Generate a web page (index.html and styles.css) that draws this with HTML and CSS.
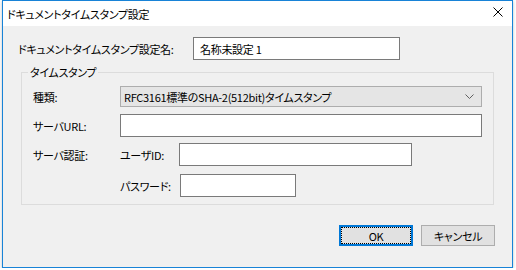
FILE: index.html
```html
<!DOCTYPE html>
<html lang="ja">
<head>
  <meta charset="UTF-8" />
  <title>ドキュメントタイムスタンプ設定</title>
  <link rel="stylesheet" href="styles.css">
</head>
<body>
  <div class="window">
    <div class="titlebar">
      <span class="title">ドキュメントタイムスタンプ設定</span>
      <svg class="close" width="10" height="10" viewBox="0 0 10 10">
        <path d="M0.5 0.5 L9.5 9.5 M9.5 0.5 L0.5 9.5" stroke="#000" stroke-width="1" fill="none" />
      </svg>
    </div>

    <div class="content">
      <div class="name-row">
        <label class="name-label" for="name">ドキュメントタイムスタンプ設定名:</label>
        <input class="edit name-input" type="text" id="name" value="名称未設定 1" />
      </div>

      <fieldset class="group">
        <legend>タイムスタンプ</legend>

        <div class="row row-kind">
          <label class="row-label">種類:</label>
          <div class="combo">
            <span>RFC3161標準のSHA-2(512bit)タイムスタンプ</span>
            <svg class="chevron" width="9" height="5" viewBox="0 0 9 5">
              <path d="M0.5 0.5 L4.5 4.5 L8.5 0.5" stroke="#606060" stroke-width="1" fill="none" />
            </svg>
          </div>
        </div>

        <div class="row row-url">
          <label class="row-label" for="url">サーバURL:</label>
          <input class="edit url-input" type="text" id="url" />
        </div>

        <div class="row row-user">
          <label class="row-label">サーバ認証:</label>
          <label class="sub-label" for="user">ユーザID:</label>
          <input class="edit user-input" type="text" id="user" />
        </div>

        <div class="row row-pass">
          <span class="row-label"></span>
          <label class="sub-label" for="pass">パスワード:</label>
          <input class="edit pass-input" type="password" id="pass" />
        </div>
      </fieldset>

      <div class="buttons">
        <button class="btn btn-default">OK</button>
        <button class="btn">キャンセル</button>
      </div>
    </div>
  </div>
</body>
</html>
```

FILE: styles.css
```css
body {
  margin: 0;
  background: #ffffff;
  font-family: "Noto Sans CJK JP", "Noto Sans", sans-serif;
  font-size: 11px;
  letter-spacing: -0.3px;
  font-feature-settings: "palt";
  color: #000000;
}

.window {
  box-sizing: border-box;
  margin-left: 2px;
  width: 511px;
  height: 268px;
  border: 1px solid #1883d7;
  background: #f0f0f0;
  box-shadow: 0 1px 3px rgba(0, 0, 0, 0.25);
  display: flex;
  flex-direction: column;
}

.titlebar {
  height: 25px;
  background: #ffffff;
  display: flex;
  align-items: center;
  padding: 0 9px 0 4px;
}

.title {
  flex: 1;
  line-height: 16px;
}

.close {
  display: block;
  margin-top: -3px;
}

.content {
  padding: 11px 17px 0 15px;
}

.name-row {
  display: flex;
  align-items: center;
  white-space: nowrap;
}

.name-label {
  flex: 0 0 175px;
}

.edit {
  box-sizing: border-box;
  height: 23px;
  margin: 0;
  padding: 0 6px;
  border: 1px solid #7a7a7a;
  background: #ffffff;
  font: inherit;
  letter-spacing: inherit;
  font-feature-settings: "palt";
  color: #000000;
  outline: none;
}

.name-input {
  width: 207px;
}

.group {
  box-sizing: border-box;
  margin: 4px 1px 0 3px;
  padding: 6px 11px 7px 11px;
  border: 1px solid #dcdcdc;
  min-width: 0;
}

.group legend {
  margin-left: -5px;
  padding: 0 2px;
  line-height: 16px;
}

.row {
  display: flex;
  align-items: center;
  white-space: nowrap;
}

.row-label {
  flex: 0 0 87px;
}

.row-url {
  margin-top: 7px;
}

.row-user {
  margin-top: 6px;
}

.row-pass {
  margin-top: 8px;
}

.combo {
  box-sizing: border-box;
  width: 362px;
  height: 21px;
  border: 1px solid #adadad;
  background: #e5e5e5;
  display: flex;
  align-items: center;
  justify-content: space-between;
  padding: 0 7px 0 3px;
}

.url-input {
  width: 362px;
}

.sub-label {
  flex: 0 0 59px;
}

.user-input {
  width: 233px;
}

.pass-input {
  width: 116px;
  margin-left: 1px;
}

.buttons {
  display: flex;
  justify-content: flex-end;
  gap: 8px;
  margin-top: 20px;
}

.btn {
  box-sizing: border-box;
  width: 74px;
  height: 21px;
  margin: 0;
  padding: 0;
  border: 1px solid #adadad;
  background: #e1e1e1;
  font: inherit;
  letter-spacing: inherit;
  font-feature-settings: "palt";
  color: #000000;
}

.btn-default {
  border: 2px solid #0078d7;
  outline: 1px dotted #000000;
  outline-offset: -3px;
}
```
